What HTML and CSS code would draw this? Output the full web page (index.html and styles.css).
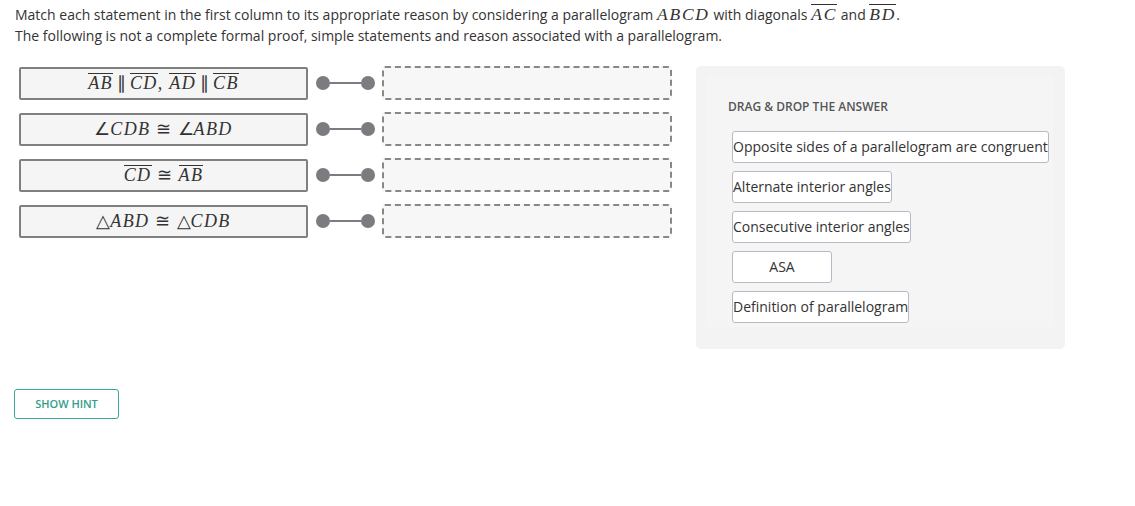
FILE: index.html
```html
<!DOCTYPE html>
<html lang="en">
<head>
    <meta charset="UTF-8">
    <title>Parallelogram matching</title>
    <link rel="stylesheet" href="styles.css">
</head>
<body>
    <div class="page">
        <p class="intro">
            Match each statement in the first column to its appropriate reason by considering a parallelogram <span class="math">ABCD</span> with diagonals <span class="math"><span class="bar">AC</span></span> and <span class="math"><span class="bar">BD</span></span>.<br>
            The following is not a complete formal proof, simple statements and reason associated with a parallelogram.
        </p>

        <div class="board">
            <div class="matches">
                <div class="match-row">
                    <div class="statement"><span class="math"><span class="bar">AB</span><span class="op">&#8741;</span><span class="bar">CD</span><span class="up comma">,</span><span class="bar">AD</span><span class="op">&#8741;</span><span class="bar">CB</span></span></div>
                    <div class="connector"><span class="dot"></span><span class="line"></span><span class="dot"></span></div>
                    <div class="drop"></div>
                </div>
                <div class="match-row">
                    <div class="statement"><span class="math"><span class="up">&#8736;</span>CDB<span class="op op-wide">&#8773;</span><span class="up">&#8736;</span>ABD</span></div>
                    <div class="connector"><span class="dot"></span><span class="line"></span><span class="dot"></span></div>
                    <div class="drop"></div>
                </div>
                <div class="match-row">
                    <div class="statement"><span class="math"><span class="bar">CD</span><span class="op op-wide">&#8773;</span><span class="bar">AB</span></span></div>
                    <div class="connector"><span class="dot"></span><span class="line"></span><span class="dot"></span></div>
                    <div class="drop"></div>
                </div>
                <div class="match-row">
                    <div class="statement"><span class="math"><span class="up">&#9651;</span>ABD<span class="op op-wide">&#8773;</span><span class="up">&#9651;</span>CDB</span></div>
                    <div class="connector"><span class="dot"></span><span class="line"></span><span class="dot"></span></div>
                    <div class="drop"></div>
                </div>
            </div>

            <div class="panel">
                <div class="panel-inner">
                    <div class="panel-title">DRAG &amp; DROP THE ANSWER</div>
                    <div class="answers">
                        <div class="answer">Opposite sides of a parallelogram are congruent</div>
                        <div class="answer">Alternate interior angles</div>
                        <div class="answer">Consecutive interior angles</div>
                        <div class="answer answer-short">ASA</div>
                        <div class="answer">Definition of parallelogram</div>
                    </div>
                </div>
            </div>
        </div>

        <button class="hint-btn">SHOW HINT</button>
    </div>
</body>
</html>
```

FILE: styles.css
```css
body {
    margin: 0;
    font-family: "Open Sans", Arial, sans-serif;
    color: #333;
    background-color: #fff;
}
.page {
    padding: 4px 15px;
}
.intro {
    margin: 0;
    font-size: 14px;
    line-height: 21px;
}
.math {
    font-family: "Liberation Serif", "Times New Roman", serif;
    font-style: italic;
    font-size: 18px;
    letter-spacing: 1.4px;
}
.intro .math {
    font-size: 17.5px;
    letter-spacing: 1.8px;
}
.bar {
    display: inline-block;
    border-top: 1px solid #333;
    padding-top: 1px;
    line-height: 16px;
}
.up {
    font-style: normal;
    letter-spacing: 0;
}
.op {
    font-style: normal;
    letter-spacing: 0;
    margin: 0 4px;
}
.op-wide {
    margin: 0 7px 0 5px;
}
.comma {
    margin-right: 7px;
}
.board {
    display: flex;
    align-items: flex-start;
    margin-top: 20px;
}
.matches {
    display: flex;
    flex-direction: column;
    gap: 12px;
    margin-left: 4px;
}
.match-row {
    display: flex;
    align-items: center;
    height: 34px;
}
.statement {
    box-sizing: border-box;
    width: 289px;
    height: 33px;
    padding-bottom: 1px;
    border: 2px solid #808080;
    border-radius: 2px;
    background-color: #f5f5f5;
    color: #333;
    display: flex;
    align-items: center;
    justify-content: center;
}
.connector {
    display: flex;
    align-items: center;
    margin: 0 7px 0 8px;
}
.dot {
    width: 14px;
    height: 14px;
    border-radius: 50%;
    background-color: #7b7b80;
}
.line {
    width: 31px;
    height: 2px;
    background-color: #7b7b80;
}
.drop {
    box-sizing: border-box;
    width: 290px;
    height: 34px;
    border: 2px dashed #888;
    border-radius: 3px;
    background-color: #f7f7f7;
}
.panel {
    box-sizing: border-box;
    width: 369px;
    height: 283px;
    margin-left: 24px;
    padding: 11px 12px 22px 11px;
    border-radius: 5px;
    background-color: #f3f3f4;
}
.panel-inner {
    height: 100%;
    padding: 22px 0 0 21px;
    box-sizing: border-box;
    background-color: #f5f5f6;
}
.panel-title {
    font-size: 12px;
    font-weight: 600;
    color: #555;
    line-height: 16px;
}
.answers {
    display: flex;
    flex-direction: column;
    align-items: flex-start;
    gap: 8px;
    margin-top: 16px;
    margin-left: 4px;
}
.answer {
    box-sizing: border-box;
    height: 32px;
    line-height: 30px;
    font-size: 14px;
    color: #333;
    background-color: #fff;
    border: 1px solid #b9b9c6;
    border-radius: 3px;
    white-space: nowrap;
}
.answer-short {
    width: 100px;
    text-align: center;
}
.hint-btn {
    margin: 40px 0 0 -1px;
    width: 105px;
    height: 30px;
    padding: 0;
    background-color: #fff;
    border: 1px solid #3aa896;
    border-radius: 3px;
    color: #2f9e8a;
    font-family: "Open Sans", Arial, sans-serif;
    font-size: 11px;
    font-weight: 600;
    line-height: 28px;
    cursor: pointer;
}
```
